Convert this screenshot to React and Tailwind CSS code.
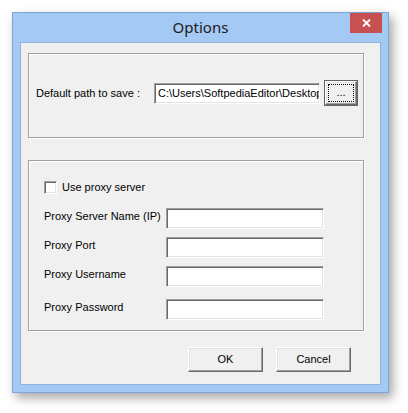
import React, { useState } from 'react';

const sunken =
  'border border-t-[#a0a0a0] border-l-[#a0a0a0] border-b-white border-r-white shadow-[inset_1px_1px_0_#696969,inset_-1px_-1px_0_#e3e3e3] bg-white';

const raised =
  'border border-t-white border-l-white border-b-[#696969] border-r-[#696969] shadow-[inset_-1px_-1px_0_#a0a0a0,inset_1px_1px_0_#e3e3e3] bg-[#f0f0f0]';

const Field = ({ value, width }) => (
  <div className={`${sunken} h-[21px] ${width} flex items-center overflow-hidden`}>
    <span className="pl-[3px] whitespace-nowrap text-[11px] text-black">{value}</span>
  </div>
);

const ProxyRow = ({ label, className }) => (
  <div className={`flex items-center h-[21px] ${className}`}>
    <span className="w-[122px] text-[11px] text-black mb-[4px]">{label}</span>
    <Field value="" width="w-[158px]" />
  </div>
);

const App = () => {
  const [useProxy, setUseProxy] = useState(false);

  return (
    <div className="w-[408px] h-[413px] bg-white pt-[12px] pl-[12px] font-['Liberation_Sans',Arial,sans-serif]">
      <div className="w-[377px] h-[381px] border border-[#7ea5d6] bg-[#a4c9f5] shadow-[4px_5px_10px_rgba(0,0,0,0.35)] flex flex-col">
        {/* title bar */}
        <div className="h-[29px] flex items-start relative">
          <div className="flex-1 text-center pt-[5px] text-[15px] text-[#202020] font-['Noto_Sans',sans-serif] leading-[18px]">
            Options
          </div>
          <div className="absolute right-[6px] top-0 w-[32px] h-[20px] bg-[#c75050] flex items-center justify-center">
            <svg width="9" height="8" viewBox="0 0 9 8">
              <path d="M1 0.5 L8 7.5 M8 0.5 L1 7.5" stroke="white" strokeWidth="1.8" />
            </svg>
          </div>
        </div>

        {/* client area */}
        <div className="mx-[7px] w-[361px] h-[343px] border border-[#8fb1dc] bg-[#f0f0f0] flex flex-col">
          <div className="ml-[7px] mt-[10px] w-[336px] h-[85px] border border-[#a0a0a0] shadow-[inset_1px_1px_0_#fff,1px_1px_0_#fff] pl-[7px] pt-[26px]">
            <div className="flex items-center">
              <span className="w-[118px] text-[11px] text-black mt-[1px]">Default path to save :</span>
              <Field value="C:\Users\SoftpediaEditor\Desktop" width="w-[166px]" />
              <div className="ml-[4px] w-[34px] h-[26px] border border-[#646464] bg-[#f0f0f0] p-0">
                <div className={`${raised} w-full h-full p-[2px]`}>
                  <div className="w-full h-full border border-dotted border-black flex items-center justify-center text-[11px] leading-none pb-[2px]">
                    ...
                  </div>
                </div>
              </div>
            </div>
          </div>

          <div className="ml-[7px] mt-[22px] w-[336px] h-[171px] border border-[#a0a0a0] shadow-[inset_1px_1px_0_#fff,1px_1px_0_#fff] pl-[15px] pt-[20px]">
            <label className="flex items-center h-[13px] cursor-default">
              <span
                onClick={() => setUseProxy(!useProxy)}
                className={`${sunken} w-[13px] h-[13px] flex items-center justify-center`}
              >
                {useProxy && (
                  <svg width="7" height="7" viewBox="0 0 7 7">
                    <path d="M0.5 3 L2.5 5.5 L6.5 0.5" stroke="black" strokeWidth="1.5" fill="none" />
                  </svg>
                )}
              </span>
              <span className="ml-[5px] text-[11px] text-black">Use proxy server</span>
            </label>
            <ProxyRow label="Proxy Server Name (IP)" className="mt-[14px]" />
            <ProxyRow label="Proxy Port" className="mt-[8px]" />
            <ProxyRow label="Proxy Username" className="mt-[8px]" />
            <ProxyRow label="Proxy Password" className="mt-[12px]" />
          </div>

          <div className="flex mt-[16px] ml-[167px] gap-[13px]">
            <button className={`${raised} w-[75px] h-[25px] text-[11px] text-black`}>OK</button>
            <button className={`${raised} w-[75px] h-[25px] text-[11px] text-black`}>Cancel</button>
          </div>
        </div>
      </div>
    </div>
  );
};

export default App;
